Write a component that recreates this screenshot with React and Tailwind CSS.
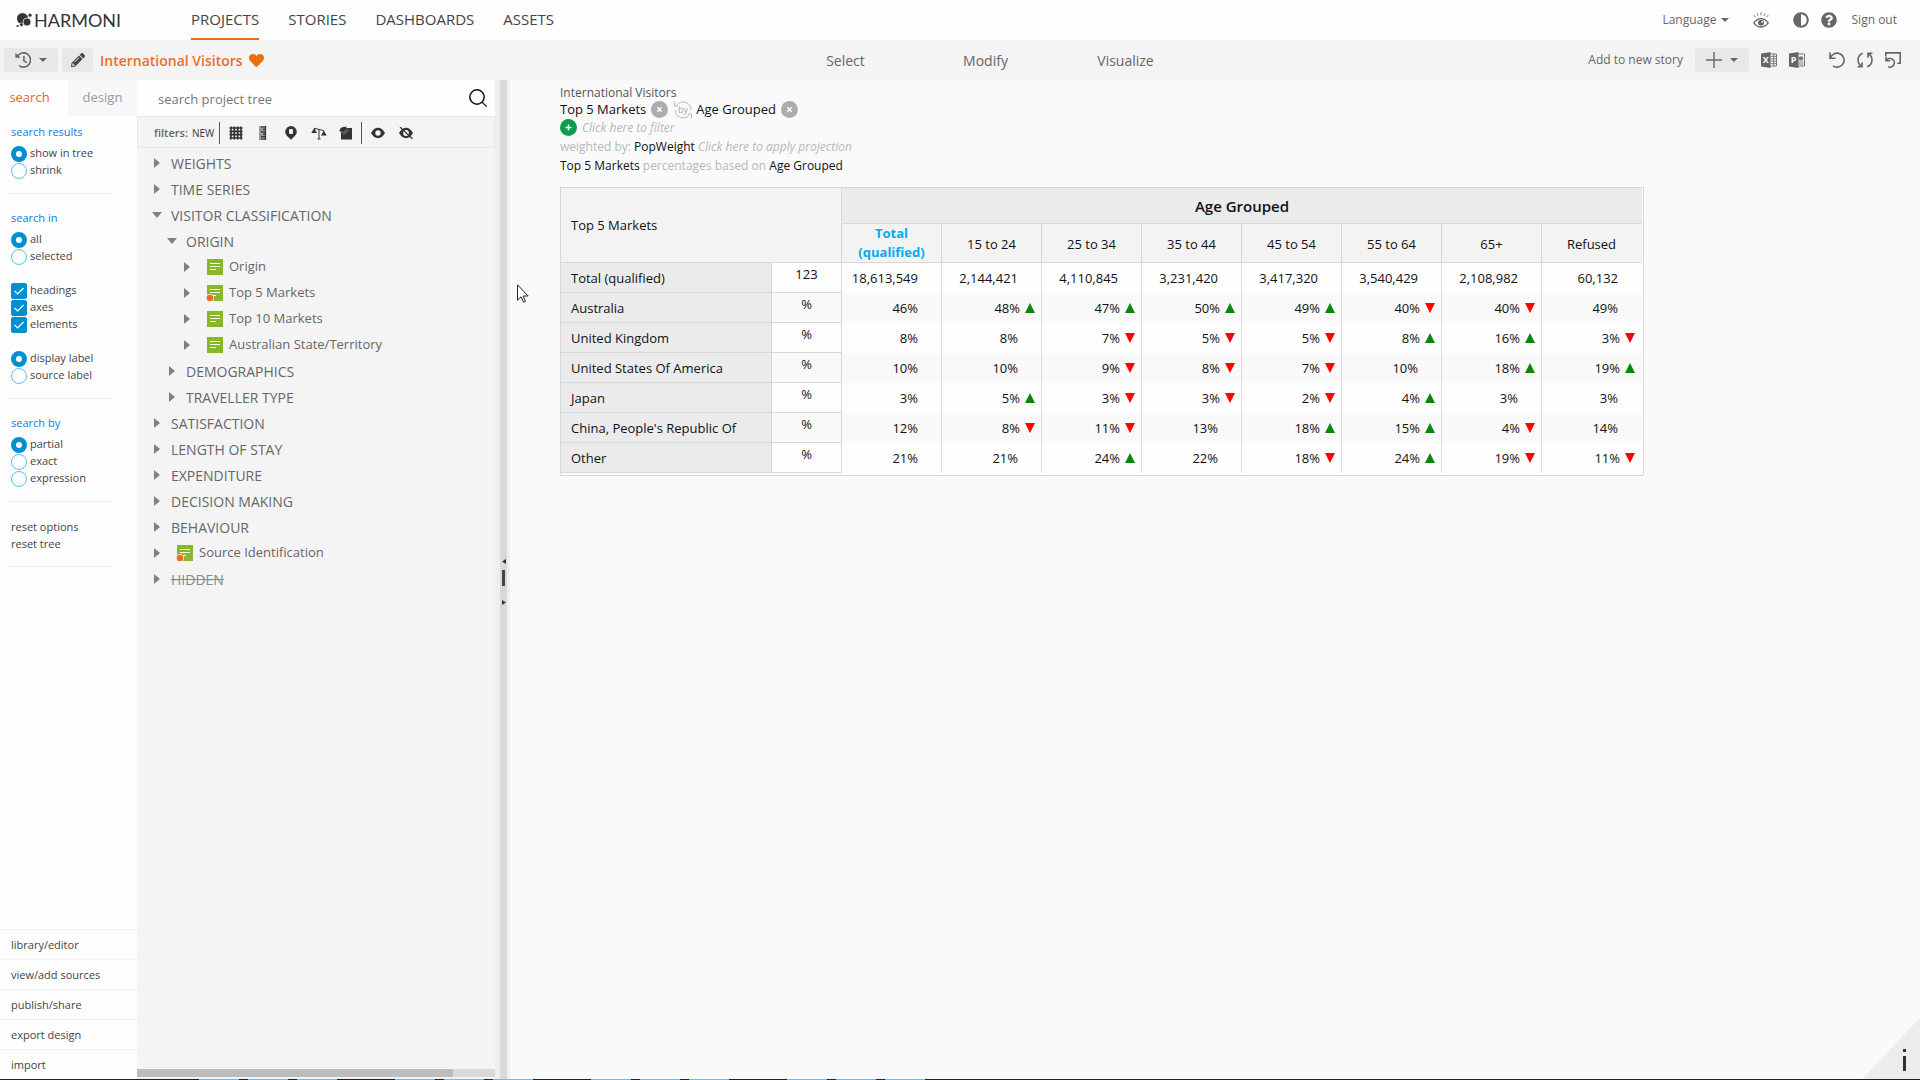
import { useState } from "react";
import clsx from "clsx";
import { FaAdjust, FaHeart, FaPencilAlt, FaQuestionCircle } from "react-icons/fa";

const NAV = ["PROJECTS", "STORIES", "DASHBOARDS", "ASSETS"];

const TREE = [
  { depth: 0, label: "WEIGHTS" },
  { depth: 0, label: "TIME SERIES" },
  { depth: 0, label: "VISITOR CLASSIFICATION", open: true },
  { depth: 1, label: "ORIGIN", open: true },
  { depth: 2, label: "Origin", axis: true },
  { depth: 2, label: "Top 5 Markets", axis: true, used: true },
  { depth: 2, label: "Top 10 Markets", axis: true },
  { depth: 2, label: "Australian State/Territory", axis: true },
  { depth: 1, label: "DEMOGRAPHICS" },
  { depth: 1, label: "TRAVELLER TYPE" },
  { depth: 0, label: "SATISFACTION" },
  { depth: 0, label: "LENGTH OF STAY" },
  { depth: 0, label: "EXPENDITURE" },
  { depth: 0, label: "DECISION MAKING" },
  { depth: 0, label: "BEHAVIOUR" },
  { depth: 0, label: "Source Identification", axis: true, used: true },
  { depth: 0, label: "HIDDEN", hidden: true },
];

const INDENT = ["pl-[15px]", "pl-[30px]", "pl-[45px]"];

const COLUMNS = ["15 to 24", "25 to 34", "35 to 44", "45 to 54", "55 to 64", "65+", "Refused"];

// "+" is significantly higher, "-" significantly lower
const ROWS = [
  ["Total (qualified)", "123", "18,613,549", "2,144,421", "4,110,845", "3,231,420", "3,417,320", "3,540,429", "2,108,982", "60,132"],
  ["Australia", "%", "46%", "48%+", "47%+", "50%+", "49%+", "40%-", "40%-", "49%"],
  ["United Kingdom", "%", "8%", "8%", "7%-", "5%-", "5%-", "8%+", "16%+", "3%-"],
  ["United States Of America", "%", "10%", "10%", "9%-", "8%-", "7%-", "10%", "18%+", "19%+"],
  ["Japan", "%", "3%", "5%+", "3%-", "3%-", "2%-", "4%+", "3%", "3%"],
  ["China, People's Republic Of", "%", "12%", "8%-", "11%-", "13%", "18%+", "15%+", "4%-", "14%"],
  ["Other", "%", "21%", "21%", "24%+", "22%", "18%-", "24%+", "19%-", "11%-"],
];

const FOOTER_LINKS = ["library/editor", "view/add sources", "publish/share", "export design", "import"];

const TASKBAR = [199, 248, 297, 395, 444, 493, 591, 640, 689, 787, 836, 885];

function Caret({ className }) {
  return (
    <svg viewBox="0 0 8 4" className={clsx("w-2 h-1", className)} fill="currentColor">
      <path d="M0 0h8L4 4z" />
    </svg>
  );
}

function Logo() {
  return (
    <a href="#" className="flex items-center w-[175px] text-[#333]">
      <svg viewBox="0 0 18 16" className="w-[18px] h-4" fill="currentColor">
        <circle cx="6.5" cy="6.5" r="5.5" />
        <circle cx="11" cy="10" r="4" stroke="#fff" strokeWidth=".7" />
        <circle cx="14" cy="3.2" r="1.6" />
        <circle cx="1.6" cy="14" r="1.1" />
        <circle cx="5.4" cy="12.8" r="1.8" stroke="#fff" strokeWidth=".5" />
      </svg>
      <span className="font-[Lato,sans-serif] text-[18px] leading-5">HARMONI</span>
    </a>
  );
}

function Header() {
  return (
    <header className="h-10 shrink-0 flex items-center bg-[#fefefe] pl-4 pr-[23px] text-[#555]">
      <Logo />
      <nav className="flex h-full gap-[29px] text-[15px] font-medium text-[#444]">
        {NAV.map((item, i) => (
          <a
            key={item}
            href="#"
            className={clsx(
              "flex items-center border-b-2",
              i === 0 ? "border-b-[#e87024]" : "border-b-transparent"
            )}
          >
            {item}
          </a>
        ))}
      </nav>
      <div className="ml-auto flex items-center text-[12px] text-[#666]">
        <button className="flex items-center gap-1">
          Language <Caret />
        </button>
        <button className="ml-6" aria-label="Preview">
          <svg viewBox="0 0 16 16" className="w-4 h-4" fill="none" stroke="currentColor">
            <path d="M.8 10.8Q4 6.6 8 6.6t7.2 4.2Q12 15 8 15T.8 10.8z" strokeWidth="1.3" />
            <circle cx="8" cy="10.8" r="3" fill="currentColor" stroke="none" />
            <circle cx="9.2" cy="9.8" r=".9" fill="#fff" stroke="none" />
            <path d="M.8 3.2l1.8 2M4 1.4l1 2.4M8 .4v2.8M12 1.4l-1 2.4M15.2 3.2l-1.8 2" strokeWidth=".9" />
          </svg>
        </button>
        <button className="ml-6" aria-label="Contrast">
          <FaAdjust size={16} />
        </button>
        <button className="ml-3" aria-label="Help">
          <FaQuestionCircle size={16} />
        </button>
        <a href="#" className="ml-[15px]">
          Sign out
        </a>
      </div>
    </header>
  );
}

function OfficeIcon({ letter, children }) {
  return (
    <svg viewBox="0 0 16 16" className="w-4 h-4">
      <path d="M0 1.6L9.6 0v16L0 14.4z" fill="#666" />
      <path d="M9.6 2h5.9v12H9.6" fill="none" stroke="#777" />
      {children}
      <text x="1.8" y="11.4" fontSize="9" fontWeight="700" fill="#fff">
        {letter}
      </text>
    </svg>
  );
}

function Toolbar() {
  return (
    <div className="h-10 shrink-0 flex items-center bg-[#f4f4f5] pl-1 pr-[19px] text-[#666]">
      <div className="flex flex-1 items-center">
        <button className="w-[54px] h-6 flex items-center justify-center gap-2 rounded-xs bg-[#e8e8e9]" aria-label="History">
          <svg viewBox="0 0 18 18" className="w-4 h-4" fill="none" stroke="currentColor" strokeWidth="1.8">
            <path d="M2.8 4.6A8 8 0 1 1 4.6 15.4" />
            <path d="M10 4.6V10l3.4 2" />
            <path d="M.4.8v5.8h5.8z" fill="currentColor" stroke="none" />
          </svg>
          <Caret />
        </button>
        <button className="ml-1 w-[31px] h-6 flex items-center justify-center rounded-xs bg-[#e8e8e9] text-[#444]" aria-label="Edit">
          <FaPencilAlt size={14} />
        </button>
        <h1 className="ml-[7px] text-[14px] font-semibold text-[#e87024]">International Visitors</h1>
        <FaHeart size={15} className="ml-[6px] text-[#e8710f]" />
      </div>
      <nav className="flex pl-[66px] text-[14px] font-medium">
        {["Select", "Modify", "Visualize"].map((item) => (
          <a key={item} href="#" className="w-[140px] text-center">
            {item}
          </a>
        ))}
      </nav>
      <div className="flex flex-1 items-center justify-end">
        <span className="text-[12px]">Add to new story</span>
        <button className="ml-3 w-[54px] h-6 flex items-center justify-center gap-2 rounded-xs bg-[#e8e8e9]" aria-label="Add">
          <svg viewBox="0 0 16 16" className="w-4 h-4" stroke="currentColor" strokeWidth="1.4">
            <path d="M8 0v16M0 8h16" />
          </svg>
          <Caret />
        </button>
        <button className="ml-3" aria-label="Export to Excel">
          <OfficeIcon letter="X">
            <path d="M10 4.4h5M10 6.8h5M10 9.2h5M10 11.6h5M12.6 2v12" stroke="#777" strokeWidth=".9" />
          </OfficeIcon>
        </button>
        <button className="ml-3" aria-label="Export to PowerPoint">
          <OfficeIcon letter="P">
            <path d="M10 10h4.4M10 12h4.4" stroke="#777" strokeWidth=".9" />
            <circle cx="12" cy="6.4" r="2.2" fill="#777" />
          </OfficeIcon>
        </button>
        <button className="ml-6" aria-label="Undo">
          <svg viewBox="0 0 16 16" className="w-4 h-4" fill="none" stroke="currentColor" strokeWidth="1.6">
            <path d="M1 .6v5.6h5.6" />
            <path d="M1.4 6A7 7 0 1 1 4 13.8" />
          </svg>
        </button>
        <button className="ml-3" aria-label="Refresh">
          <svg viewBox="0 0 16 16" className="w-4 h-4" fill="none" stroke="currentColor" strokeWidth="1.6">
            <path d="M5.8 1.2A7.2 7.2 0 0 0 4.6 14.2M.6 14.8h4.4v-4.6" />
            <path d="M10.2 14.8A7.2 7.2 0 0 0 11.4 1.8M15.4 1.2H11v4.6" />
          </svg>
        </button>
        <button className="ml-3" aria-label="Reset view">
          <svg viewBox="0 0 16 16" className="w-4 h-4" fill="none" stroke="currentColor" strokeWidth="1.6">
            <path d="M.8 4V.9h14.4v10.3h-3" />
            <path d="M1 4.6v4.2h4.2" />
            <path d="M1.4 8.4A4.3 4.3 0 1 1 3 14.6" />
          </svg>
        </button>
      </div>
    </div>
  );
}

function Radio({ name, label, value, onChange }) {
  return (
    <label className="flex items-center gap-[3px] h-[17px]">
      <input
        type="radio"
        name={name}
        checked={value === label}
        onChange={() => onChange(label)}
        className="appearance-none w-4 h-4 rounded-full bg-white border border-[#55c3ec] checked:border-5 checked:border-[#0090d0]"
      />
      {label}
    </label>
  );
}

function Check({ label }) {
  return (
    <label className="flex items-center gap-[3px] h-[17px]">
      <span className="grid">
        <input
          type="checkbox"
          defaultChecked
          className="peer [grid-area:1/1] appearance-none w-4 h-4 rounded-xs border border-[#0090d0] checked:bg-[#0090d0]"
        />
        <svg
          viewBox="0 0 16 16"
          className="[grid-area:1/1] w-4 h-4 pointer-events-none invisible peer-checked:visible"
          fill="none"
          stroke="#fff"
          strokeWidth="1.2"
        >
          <path d="M3.6 8l3 3 6-6" />
        </svg>
      </span>
      {label}
    </label>
  );
}

function RadioGroup({ name, options }) {
  const [value, setValue] = useState(options[0]);
  return options.map((label) => (
    <Radio key={label} name={name} label={label} value={value} onChange={setValue} />
  ));
}

function Section({ title, children }) {
  return (
    <section className="ml-[9px] w-[104px] pl-[2px] pb-[14px] mb-4 border-b border-[#ececee] whitespace-nowrap">
      {title && <h2 className="h-4 mb-[5px] leading-4 text-[#0a7cea]">{title}</h2>}
      {children}
    </section>
  );
}

function OptionsPanel() {
  return (
    <aside className="w-[137px] shrink-0 flex flex-col bg-[#fefefe] text-[11px] text-[#444]">
      <div className="h-9 mb-2 flex text-[13px]">
        <button className="w-[68px] pr-[9px] text-[#e8632a]">search</button>
        <button className="flex-1 bg-[#f7f7f9] text-[#999]">design</button>
      </div>
      <Section title="search results">
        <RadioGroup name="results" options={["show in tree", "shrink"]} />
      </Section>
      <Section title="search in">
        <RadioGroup name="scope" options={["all", "selected"]} />
        <div className="my-[17px]">
          <Check label="headings" />
          <Check label="axes" />
          <Check label="elements" />
        </div>
        <RadioGroup name="labels" options={["display label", "source label"]} />
      </Section>
      <Section title="search by">
        <RadioGroup name="match" options={["partial", "exact", "expression"]} />
      </Section>
      <Section>
        <button className="block h-[17px] leading-[17px]">reset options</button>
        <button className="block h-[17px] leading-[17px]">reset tree</button>
      </Section>
      <div className="mt-auto">
        {FOOTER_LINKS.map((link) => (
          <a key={link} href="#" className="flex items-center h-[30px] pt-[2px] pl-[11px] border-t border-[#f2f2f4]">
            {link}
          </a>
        ))}
      </div>
    </aside>
  );
}

function FilterBar() {
  return (
    <div className="h-8 flex items-center pt-[2px] pl-4 border border-[#e9e9ec] text-[11px] text-[#333]">
      <span className="font-semibold text-[#666]">filters:</span>
      <button className="ml-1 text-[10px]">NEW</button>
      <span className="ml-[5px] w-px h-[22px] bg-[#555]" />
      <button className="ml-[9px]" aria-label="Grids">
        <svg viewBox="0 0 14 14" className="w-[14px] h-[14px]" stroke="currentColor" strokeWidth="1.7">
          <path d="M2 .5v13M5.3.5v13M8.7.5v13M12 .5v13M.5 2h13M.5 5.3h13M.5 8.7h13M.5 12h13" />
        </svg>
      </button>
      <button className="ml-4" aria-label="Measures">
        <svg viewBox="0 0 8 14" className="w-2 h-[14px]">
          <path d="M0 0h7v14H0z" fill="#999" />
          <path d="M6.5 0v14M2 1h5M4 3.4h3M2 5.8h5M4 8.2h3M2 10.6h5M2 13h5" stroke="#333" strokeWidth="1.2" />
        </svg>
      </button>
      <button className="ml-[18px]" aria-label="Locations">
        <svg viewBox="0 0 12 14" className="w-3 h-[14px]">
          <path d="M6 0a5.8 5.8 0 0 1 5.8 5.8C11.8 9 8.5 11 6 14 3.5 11 .2 9 .2 5.8A5.8 5.8 0 0 1 6 0z" fill="currentColor" />
          <rect x="4" y="3" width="4" height="5" rx="1" fill="#eee" />
        </svg>
      </button>
      <button className="ml-[14px]" aria-label="Weights">
        <svg viewBox="0 0 16 14" className="w-4 h-[14px]" fill="currentColor">
          <path d="M3.2 2L6 7H.3zM12.8 4.5l2.9 5H10z" />
          <path d="M3 2.2l10 2.5M8 3v10M6.5 13h3" stroke="currentColor" strokeWidth="1" fill="none" />
        </svg>
      </button>
      <button className="ml-3" aria-label="Projects">
        <svg viewBox="0 0 13 14" className="w-[13px] h-[14px]">
          <path d="M4 2h9v11.5H2V6z" fill="#333" />
          <path d="M.5 5.5Q.5 1 5 1l3-.5-3.5 5z" fill="#333" />
          <path d="M1 6.5h4l3-4M4 9l6-5" stroke="#999" strokeWidth=".7" fill="none" />
        </svg>
      </button>
      <span className="ml-[9px] w-px h-[22px] bg-[#555]" />
      <button className="ml-[9px]" aria-label="Visible">
        <svg viewBox="0 0 14 12" className="w-[14px] h-3">
          <path d="M0 6Q3 .8 7 .8T14 6q-3 5.2-7 5.2T0 6z" fill="currentColor" />
          <circle cx="7" cy="6" r="2.7" fill="#f4f4f5" />
        </svg>
      </button>
      <button className="ml-[14px]" aria-label="Hidden">
        <svg viewBox="0 0 14 12" className="w-[14px] h-3">
          <path d="M0 6Q3 .8 7 .8T14 6q-3 5.2-7 5.2T0 6z" fill="currentColor" />
          <circle cx="7" cy="6" r="2.9" fill="#f4f4f5" />
          <path d="M1 0l12.5 12" stroke="#333" strokeWidth="1.2" />
        </svg>
      </button>
    </div>
  );
}

function AxisIcon({ used }) {
  return (
    <svg viewBox="0 0 16 16" className="w-4 h-4 ml-[15px] mr-[6px] overflow-visible">
      <path d="M0 0h16v16H0z" fill="#86b82a" />
      <path d="M3 4.5h10M3 7.5h10M3 10.5h6" stroke="#fff" />
      {used && (
        <>
          <circle cx="3" cy="13" r="4" fill="#f4f4f5" />
          <circle cx="3" cy="13" r="3.3" fill="#f26a21" />
        </>
      )}
    </svg>
  );
}

function TreeRow({ node }) {
  return (
    <li className={clsx("flex items-center h-[26px]", INDENT[node.depth])}>
      <button className="w-[10px] flex justify-center text-[#808080]" aria-label={`Toggle ${node.label}`}>
        {node.open ? (
          <svg viewBox="0 0 10 6" className="w-[10px] h-[6px]" fill="currentColor">
            <path d="M0 0h10L5 6z" />
          </svg>
        ) : (
          <svg viewBox="0 0 6 10" className="w-[6px] h-[10px]" fill="currentColor">
            <path d="M0 0v10l6-5z" />
          </svg>
        )}
      </button>
      {node.axis ? <AxisIcon used={node.used} /> : <span className="w-[9px]" />}
      <span className={clsx(node.axis ? "text-[13px]" : "text-[14px]", node.hidden && "line-through text-[#888]")}>
        {node.label}
      </span>
    </li>
  );
}

function TreePanel() {
  return (
    <div className="w-[358px] shrink-0 flex flex-col bg-[#f4f4f5]">
      <div className="h-9 shrink-0 flex items-center bg-[#fefefe] pl-[21px] pr-2">
        <input
          type="search"
          aria-label="search project tree"
          placeholder="search project tree"
          className="flex-1 pt-[3px] outline-none text-[13px] placeholder:text-[#777]"
        />
        <button aria-label="Search">
          <svg viewBox="0 0 18 18" className="w-[18px] h-[18px]" fill="none" stroke="#111">
            <circle cx="8" cy="8" r="7.2" strokeWidth="1.5" />
            <path d="M13 13l4.7 4.7" strokeWidth="1.2" />
          </svg>
        </button>
      </div>
      <FilterBar />
      <ul className="flex-1 pt-[2px] text-[#666]">
        {TREE.map((node) => (
          <TreeRow key={node.label} node={node} />
        ))}
      </ul>
      <div className="h-2 mb-[2px] bg-[#d9d9d9]">
        <div className="h-full w-[316px] bg-[#bdbdbd]" />
      </div>
    </div>
  );
}

function Splitter() {
  return (
    <div className="w-[15px] shrink-0 flex flex-col items-center border-l-5 border-r-3 border-[#efeff0]">
      <div className="flex-1 w-full flex flex-col items-center justify-center pt-1 bg-[#d9d9dc] text-[#333]">
        <svg viewBox="0 0 4 5" className="w-1 h-[5px]" fill="currentColor">
          <path d="M4 0v5L0 2.5z" />
        </svg>
        <span className="mt-[6px] mb-[14px] w-[3px] h-4 bg-[#444]" />
        <svg viewBox="0 0 4 5" className="w-1 h-[5px]" fill="currentColor">
          <path d="M0 0v5l4-2.5z" />
        </svg>
      </div>
    </div>
  );
}

function RemoveButton({ label }) {
  return (
    <button aria-label={label}>
      <svg viewBox="0 0 17 17" className="w-[17px] h-[17px]">
        <circle cx="8.5" cy="8.5" r="8.5" fill="#adadad" />
        <path d="M6.3 6.3l4.4 4.4M10.7 6.3l-4.4 4.4" stroke="#fff" strokeWidth="1.4" />
      </svg>
    </button>
  );
}

function TableTitle() {
  return (
    <div className="text-[12px] text-[#b8b8b8] whitespace-nowrap">
      <div className="h-[17px] leading-[17px] text-[#555]">International Visitors</div>
      <div className="h-[17px] flex items-center text-[13px] text-[#111]">
        Top 5 Markets
        <span className="ml-[5px] mr-[6px] flex">
          <RemoveButton label="Remove Top 5 Markets" />
        </span>
        <button aria-label="Swap axes">
          <svg viewBox="0 0 18 18" className="w-[18px] h-[18px]" fill="none" stroke="#b8b8b8">
            <path d="M.6 .5V5h3M2.5 4.5A7.9 7.9 0 0 1 16.9 9" />
            <path d="M17.4 17.5V13h-3M15.5 13.500A7.9 7.9 0 0 1 1.100 9" />
            <text x="9" y="11.5" fontSize="9" textAnchor="middle" fill="#aaa" stroke="none">
              by
            </text>
          </svg>
        </button>
        <span className="ml-1 mr-[5px]">Age Grouped</span>
        <RemoveButton label="Remove Age Grouped" />
      </div>
      <button className="h-[19px] flex items-center gap-[5px] italic">
        <svg viewBox="0 0 17 17" className="w-[17px] h-[17px]">
          <circle cx="8.5" cy="8.5" r="8.5" fill="#0a9e4b" />
          <path d="M8.5 5.5v6M5.5 8.5h6" stroke="#fff" strokeWidth="1.5" />
        </svg>
        Click here to filter
      </button>
      <div className="h-[19px] leading-[19px]">
        weighted by: <span className="text-[#111]">PopWeight</span> <i>Click here to apply projection</i>
      </div>
      <div className="h-[19px] leading-[19px]">
        <span className="text-[#111]">Top 5 Markets</span> percentages based on{" "}
        <span className="text-[#111]">Age Grouped</span>
      </div>
    </div>
  );
}

function Value({ text }) {
  const sign = text.at(-1);
  if (sign !== "+" && sign !== "-") return <span className="block pr-[23px] text-right">{text}</span>;
  return (
    <span className="flex items-center justify-end gap-[5px] pr-[6px]">
      {text.slice(0, -1)}
      <svg viewBox="0 0 10 10" className="w-[10px] h-[10px]">
        {sign === "+" ? <path d="M5 0l5 10H0z" fill="#0a870a" /> : <path d="M0 0h10L5 10z" fill="#f00" />}
      </svg>
    </span>
  );
}

function ResultTable() {
  return (
    <div className="mt-3 w-fit border border-[#d8d8da] bg-[#fefefe] pb-[2px] pr-px">
      <table className="table-fixed border-separate border-spacing-0 w-[1081px] text-[13px] leading-5 text-[#111]">
        <colgroup>
          <col className="w-[211px]" />
          <col className="w-[70px]" />
          <col span={8} className="w-[100px]" />
        </colgroup>
        <thead>
          <tr className="h-9">
            <th rowSpan={2} colSpan={2} className="pl-[10px] text-left font-normal bg-[#f3f3f3] border-r border-b border-[#d8d8da]">
              Top 5 Markets
            </th>
            <th colSpan={8} className="text-[15px] font-semibold bg-[#ebebeb] border-b border-[#d8d8da]">
              Age Grouped
            </th>
          </tr>
          <tr className="h-[39px] bg-[#f3f3f3]">
            <th className="leading-[19px] font-bold text-[#00adef] border-r border-b border-[#d8d8da]">
              Total (qualified)
            </th>
            {COLUMNS.map((col) => (
              <th key={col} className="pt-[2px] font-normal border-r border-b border-[#d8d8da] last:border-r-transparent">
                {col}
              </th>
            ))}
          </tr>
        </thead>
        <tbody>
          {ROWS.map(([label, unit, ...values]) => (
            <tr key={label} className="h-[30px] even:bg-[#f9f9fa]">
              <th className="pl-[10px] text-left font-normal bg-[#ebebeb] border-r border-b border-[#d8d8da]">{label}</th>
              <td className="pb-[7px] text-center border-r border-b border-[#d8d8da]">{unit}</td>
              {values.map((value, i) => (
                <td key={i} className="border-r border-[#dcdcde] last:border-r-transparent">
                  <Value text={value} />
                </td>
              ))}
            </tr>
          ))}
        </tbody>
      </table>
    </div>
  );
}

export default function App() {
  return (
    <div className="relative h-screen flex flex-col overflow-hidden bg-[#fafafb] font-['Open_Sans','Noto_Sans',sans-serif]">
      <Header />
      <Toolbar />
      <div className="flex flex-1 min-h-0">
        <OptionsPanel />
        <TreePanel />
        <Splitter />
        <main className="flex-1 min-w-0 pl-[50px] pt-1">
          <TableTitle />
          <ResultTable />
        </main>
      </div>

      {/* info corner */}
      <button className="absolute right-0 bottom-px w-[58px] h-[61px]" aria-label="Info">
        <svg viewBox="0 0 58 61" className="w-full h-full">
          <path d="M58 0v61H0z" fill="#ededee" />
          <path d="M41 38h3v15h-3zM41 31h3v3h-3z" fill="#333" />
        </svg>
      </button>

      {/* mouse pointer */}
      <svg viewBox="0 0 12 19" className="absolute left-[517px] top-[284px] w-3 h-[19px]">
        <path d="M.5.8v15.4l3.6-3.4 2.4 5.5 2-.9-2.300-5.400h5z" fill="#fff" stroke="#222" />
      </svg>

      {/* taskbar edge */}
      <div className="relative h-px shrink-0 bg-[#222]">
        {TASKBAR.map((left) => (
          <span key={left} className="absolute top-0 w-10 h-px bg-[#7db4dc]" style={{ left }} />
        ))}
      </div>
    </div>
  );
}
